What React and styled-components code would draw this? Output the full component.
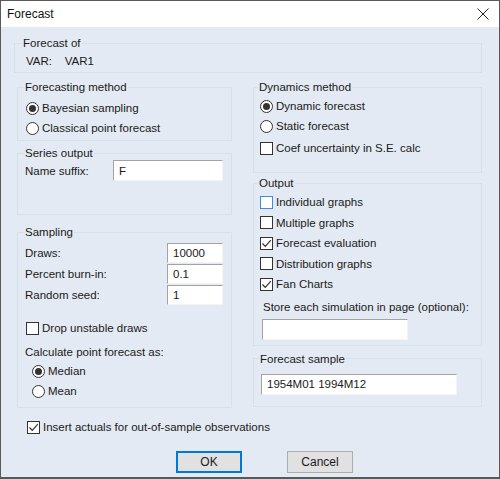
import styled, { createGlobalStyle } from 'styled-components';

const Global = createGlobalStyle`
  html, body { margin: 0; padding: 0; background: #ffffff; }
  body { font-family: "Liberation Sans", Arial, sans-serif; font-size: 11.5px; color: #1a1a1a; }
  * { box-sizing: border-box; }
`;

const Window = styled.div`
  width: 500px;
  height: 479px;
  border: 1px solid #595959;
  border-bottom-width: 2px;
  display: flex;
  flex-direction: column;
  background: #e4eaf3;
`;

const TitleBar = styled.div`
  height: 26px;
  background: #ffffff;
  display: flex;
  align-items: center;
  justify-content: space-between;
  padding: 0 10px 0 6px;
  font-size: 12px;
  color: #111;
`;

const Body = styled.div`
  flex: 1;
  padding: 9px 17px 0 13px;
  display: flex;
  flex-direction: column;
`;

const Group = styled.fieldset`
  margin: ${p => p.$mt || 0}px 0 0 0;
  padding: ${p => p.$pt || 0}px ${p => p.$px || 8}px ${p => p.$pb || 0}px ${p => p.$px || 8}px;
  border: 1px solid #d7dfe9;
  min-width: 0;
  display: flex;
  flex-direction: column;
`;

const Legend = styled.legend`
  padding: 0 1px;
  margin-left: -2px;
  line-height: 14px;
  height: 14px;
`;

const Plain = styled.div`
  line-height: 14px;
  height: 14px;
  padding-left: ${p => p.$indent || 0}px;
  margin-top: ${p => p.$mt || 0}px;
  margin-left: ${p => p.$ml || 0}px;
  white-space: pre;
`;

const Columns = styled.div`
  display: grid;
  grid-template-columns: 215px 229px;
  column-gap: 21px;
  align-items: start;
  margin-top: 7px;
  padding-left: 3px;
`;

const Column = styled.div`
  display: flex;
  flex-direction: column;
`;

const OptionRow = styled.label`
  display: flex;
  align-items: center;
  gap: 3px;
  height: ${p => p.$h || 20}px;
  margin-top: ${p => p.$mt || 0}px;
  padding-left: ${p => p.$indent || 0}px;
`;

const RadioMark = styled.span`
  width: 13px;
  height: 13px;
  border-radius: 50%;
  border: 1px solid #333;
  background: #fff;
  display: flex;
  align-items: center;
  justify-content: center;
  &::after {
    content: '';
    width: 7px;
    height: 7px;
    border-radius: 50%;
    background: ${p => (p.$on ? '#333' : 'transparent')};
  }
`;

const BoxMark = styled.span`
  width: 13px;
  height: 13px;
  border: 1px solid ${p => (p.$focus ? '#3c8ce6' : '#333')};
  background: #fff;
  display: flex;
  align-items: center;
  justify-content: center;
`;

const FieldRow = styled.div`
  display: flex;
  align-items: center;
  justify-content: space-between;
  height: 21px;
  margin-left: -1px;
`;

const Input = styled.div`
  width: ${p => p.$w}px;
  height: ${p => p.$h || 21}px;
  margin-top: ${p => p.$mt || 0}px;
  margin-left: ${p => p.$ml || 0}px;
  background: #fff;
  border-top: 1px solid #a3a3a3;
  border-left: 1px solid #a3a3a3;
  border-right: 1px solid #f4f4f4;
  border-bottom: 1px solid #f4f4f4;
  display: flex;
  align-items: center;
  padding-left: 5px;
  font-size: 11.5px;
`;

const ButtonRow = styled.div`
  display: flex;
  gap: 45px;
  margin-top: 14px;
  padding-left: 162px;
`;

const Button = styled.div`
  width: 66px;
  height: 22px;
  background: #e1e1e1;
  border: ${p => (p.$default ? '2px solid #0078d7' : '1px solid #adadad')};
  display: flex;
  align-items: center;
  justify-content: center;
  font-size: 12px;
`;

function Radio({ on, children, ...rest }) {
  return (
    <OptionRow {...rest}>
      <RadioMark $on={on} />
      {children}
    </OptionRow>
  );
}

function Check({ on, focus, children, ...rest }) {
  return (
    <OptionRow {...rest}>
      <BoxMark $focus={focus}>
        {on && (
          <svg width="11" height="11" viewBox="0 0 11 11">
            <path d="M1.5 5.5 L4.3 8.3 L9.8 2.2" fill="none" stroke="#333" strokeWidth="1.2" />
          </svg>
        )}
      </BoxMark>
      {children}
    </OptionRow>
  );
}

export default function App() {
  return (
    <Window>
      <Global />
      <TitleBar>
        <span>Forecast</span>
        <svg width="12" height="12" viewBox="0 0 12 12">
          <path d="M0.5 0.5 L11.5 11.5 M11.5 0.5 L0.5 11.5" stroke="#222" strokeWidth="1" />
        </svg>
      </TitleBar>
      <Body>
        <Group $pt={4} $pb={4} $px={9}>
          <Legend>Forecast of</Legend>
          <Plain $indent={2}>{'VAR:    VAR1'}</Plain>
        </Group>

        <Columns>
          <Column>
            <Group $pt={4} $pb={2}>
              <Legend>Forecasting method</Legend>
              <Radio on>Bayesian sampling</Radio>
              <Radio>Classical point forecast</Radio>
            </Group>

            <Group $mt={5} $pb={33}>
              <Legend>Series output</Legend>
              <FieldRow>
                <span>Name suffix:</span>
                <Input $w={110}>F</Input>
              </FieldRow>
            </Group>

            <Group $mt={10} $pt={3} $pb={6}>
              <Legend>Sampling</Legend>
              <FieldRow>
                <span>Draws:</span>
                <Input $w={56} $h={20}>10000</Input>
              </FieldRow>
              <FieldRow>
                <span>Percent burn-in:</span>
                <Input $w={56} $h={20}>0.1</Input>
              </FieldRow>
              <FieldRow>
                <span>Random seed:</span>
                <Input $w={56} $h={20}>1</Input>
              </FieldRow>
              <Check $mt={13}>Drop unstable draws</Check>
              <Plain $mt={7} $ml={-1}>Calculate point forecast as:</Plain>
              <Radio on $mt={2} $indent={6}>Median</Radio>
              <Radio $indent={6}>Mean</Radio>
            </Group>
          </Column>

          <Column>
            <Group $pt={2} $pb={14} $px={6}>
              <Legend>Dynamics method</Legend>
              <Radio on>Dynamic forecast</Radio>
              <Radio>Static forecast</Radio>
              <Check $mt={2}>Coef uncertainty in S.E. calc</Check>
            </Group>

            <Group $mt={3} $pt={2} $pb={5} $px={6}>
              <Legend>Output</Legend>
              <Check $h={20.5} focus>Individual graphs</Check>
              <Check $h={20.5}>Multiple graphs</Check>
              <Check $h={20.5} on>Forecast evaluation</Check>
              <Check $h={20.5}>Distribution graphs</Check>
              <Check $h={20.5} on>Fan Charts</Check>
              <Plain $mt={5} $indent={3}>Store each simulation in page (optional):</Plain>
              <Input $w={146} $mt={5} $ml={2} />
            </Group>

            <Group $mt={6} $pt={8} $pb={11} $px={7}>
              <Legend>Forecast sample</Legend>
              <Input $w={196}>1954M01 1994M12</Input>
            </Group>
          </Column>
        </Columns>

        <Check on $mt={9} $indent={13}>Insert actuals for out-of-sample observations</Check>

        <ButtonRow>
          <Button $default>OK</Button>
          <Button>Cancel</Button>
        </ButtonRow>
      </Body>
    </Window>
  );
}
